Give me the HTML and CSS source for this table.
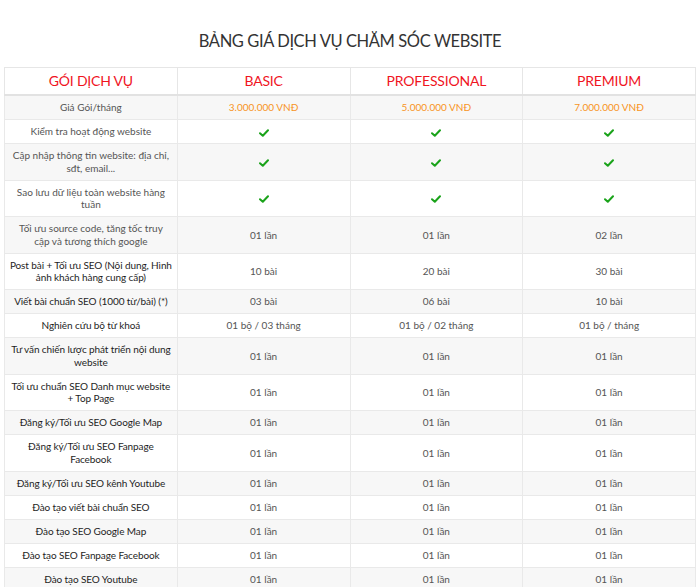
FILE: index.html
```html
<!DOCTYPE html>
<html lang="vi">
<head>
<meta charset="utf-8">
<title>Bảng giá dịch vụ chăm sóc website</title>
<link rel="stylesheet" href="styles.css">
</head>
<body>
<div class="page">
  <h1 class="title">BẢNG GIÁ DỊCH VỤ CHĂM SÓC WEBSITE</h1>
  <table class="price-table">
    <thead>
      <tr>
        <th>GÓI DỊCH VỤ</th>
        <th>BASIC</th>
        <th>PROFESSIONAL</th>
        <th>PREMIUM</th>
      </tr>
    </thead>
    <tbody>
      <tr>
        <td>Giá Gói/tháng</td>
        <td class="price">3.000.000 VNĐ</td>
        <td class="price">5.000.000 VNĐ</td>
        <td class="price">7.000.000 VNĐ</td>
      </tr>
      <tr>
        <td>Kiểm tra hoạt động website</td>
        <td><svg class="check" viewBox="0 0 10 8"><path d="M1 4.2 L3.8 6.8 L9 1.2"/></svg></td>
        <td><svg class="check" viewBox="0 0 10 8"><path d="M1 4.2 L3.8 6.8 L9 1.2"/></svg></td>
        <td><svg class="check" viewBox="0 0 10 8"><path d="M1 4.2 L3.8 6.8 L9 1.2"/></svg></td>
      </tr>
      <tr>
        <td>Cập nhập thông tin website: địa chỉ,<br>sđt, email...</td>
        <td><svg class="check" viewBox="0 0 10 8"><path d="M1 4.2 L3.8 6.8 L9 1.2"/></svg></td>
        <td><svg class="check" viewBox="0 0 10 8"><path d="M1 4.2 L3.8 6.8 L9 1.2"/></svg></td>
        <td><svg class="check" viewBox="0 0 10 8"><path d="M1 4.2 L3.8 6.8 L9 1.2"/></svg></td>
      </tr>
      <tr>
        <td>Sao lưu dữ liệu toàn website hàng<br>tuần</td>
        <td><svg class="check" viewBox="0 0 10 8"><path d="M1 4.2 L3.8 6.8 L9 1.2"/></svg></td>
        <td><svg class="check" viewBox="0 0 10 8"><path d="M1 4.2 L3.8 6.8 L9 1.2"/></svg></td>
        <td><svg class="check" viewBox="0 0 10 8"><path d="M1 4.2 L3.8 6.8 L9 1.2"/></svg></td>
      </tr>
      <tr>
        <td>Tối ưu source code, tăng tốc truy<br>cập và tương thích google</td>
        <td>01 lần</td>
        <td>01 lần</td>
        <td>02 lần</td>
      </tr>
      <tr>
        <td class="strong">Post bài + Tối ưu SEO (Nội dung, Hình<br>ảnh khách hàng cung cấp)</td>
        <td>10 bài</td>
        <td>20 bài</td>
        <td>30 bài</td>
      </tr>
      <tr>
        <td class="strong">Viết bài chuẩn SEO (1000 từ/bài) (*)</td>
        <td>03 bài</td>
        <td>06 bài</td>
        <td>10 bài</td>
      </tr>
      <tr>
        <td class="strong">Nghiên cứu bộ từ khoá</td>
        <td>01 bộ / 03 tháng</td>
        <td>01 bộ / 02 tháng</td>
        <td>01 bộ / tháng</td>
      </tr>
      <tr>
        <td class="strong">Tư vấn chiến lược phát triển nội dung<br>website</td>
        <td>01 lần</td>
        <td>01 lần</td>
        <td>01 lần</td>
      </tr>
      <tr>
        <td class="strong">Tối ưu chuẩn SEO Danh mục website<br>+ Top Page</td>
        <td>01 lần</td>
        <td>01 lần</td>
        <td>01 lần</td>
      </tr>
      <tr>
        <td class="strong">Đăng ký/Tối ưu SEO Google Map</td>
        <td>01 lần</td>
        <td>01 lần</td>
        <td>01 lần</td>
      </tr>
      <tr>
        <td class="strong">Đăng ký/Tối ưu SEO Fanpage<br>Facebook</td>
        <td>01 lần</td>
        <td>01 lần</td>
        <td>01 lần</td>
      </tr>
      <tr>
        <td class="strong">Đăng ký/Tối ưu SEO kênh Youtube</td>
        <td>01 lần</td>
        <td>01 lần</td>
        <td>01 lần</td>
      </tr>
      <tr>
        <td class="strong">Đào tạo viết bài chuẩn SEO</td>
        <td>01 lần</td>
        <td>01 lần</td>
        <td>01 lần</td>
      </tr>
      <tr>
        <td class="strong">Đào tạo SEO Google Map</td>
        <td>01 lần</td>
        <td>01 lần</td>
        <td>01 lần</td>
      </tr>
      <tr>
        <td class="strong">Đào tạo SEO Fanpage Facebook</td>
        <td>01 lần</td>
        <td>01 lần</td>
        <td>01 lần</td>
      </tr>
      <tr>
        <td class="strong">Đào tạo SEO Youtube</td>
        <td>01 lần</td>
        <td>01 lần</td>
        <td>01 lần</td>
      </tr>
    </tbody>
  </table>
</div>
</body>
</html>
```
FILE: styles.css
```css
html, body {
  margin: 0;
  padding: 0;
  background: #fff;
}
body {
  font-family: Lato, "Liberation Sans", sans-serif;
  color: #555;
}
.page {
  padding: 0 4px;
}
.title {
  margin: 31px 0 16px;
  font-size: 16.5px;
  line-height: 20px;
  font-weight: 400;
  letter-spacing: -0.4px;
  color: #333;
  text-align: center;
}
.price-table {
  width: 100%;
  table-layout: fixed;
  border-collapse: collapse;
  border: 1px solid #e6e6e6;
}
.price-table th {
  padding: 5px 2px;
  font-size: 14px;
  line-height: 16px;
  font-weight: 400;
  letter-spacing: -0.2px;
  color: #f0141e;
  text-align: center;
  border: 1px solid #e6e6e6;
  border-bottom: 2px solid #e2e2e2;
}
.price-table td {
  padding: 5.2px 2px;
  font-size: 10px;
  line-height: 12.6px;
  text-align: center;
  color: #555;
  white-space: nowrap;
  border: 1px solid #e9e9e9;
}
.price-table tbody tr:nth-child(odd) td {
  background: #f7f7f7;
}
.price-table td.strong {
  color: #1e1e1e;
  letter-spacing: -0.1px;
}
.price-table td.price {
  color: #f7941d;
}
.check {
  display: inline-block;
  width: 10px;
  height: 8px;
  vertical-align: middle;
  fill: none;
  stroke: #1aa31a;
  stroke-width: 2;
  stroke-linecap: round;
  stroke-linejoin: round;
}
```
